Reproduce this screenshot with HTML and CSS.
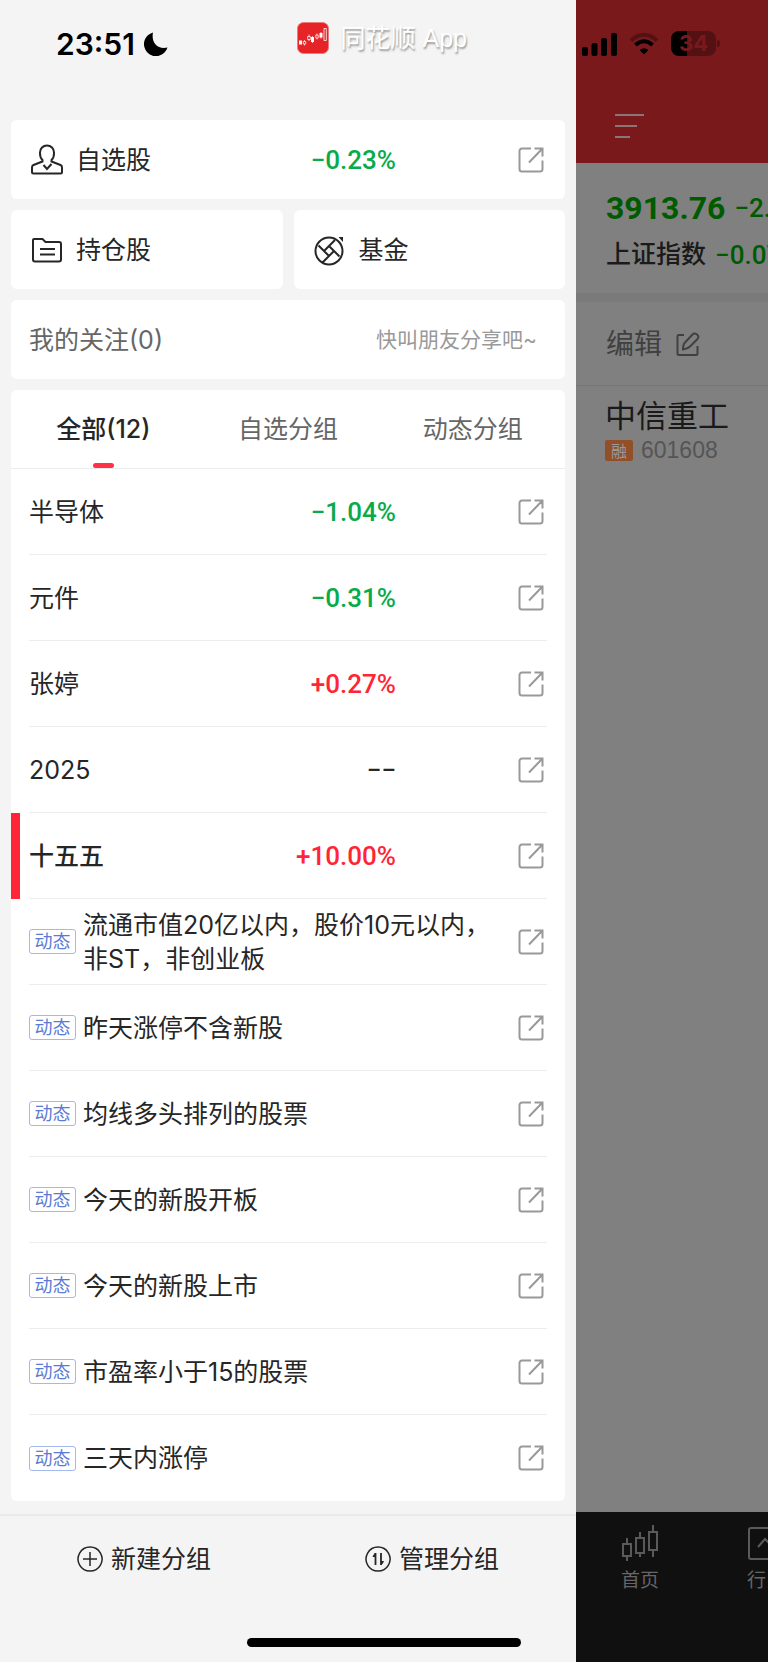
FILE: index.html
```
<!DOCTYPE html>
<html lang="zh-CN">
<head>
  <meta charset="UTF-8" />
  <meta name="viewport" content="width=device-width, initial-scale=1" />
  <title>自选分组</title>
  <link rel="stylesheet" href="styles.css">
</head>
<body>

  <svg class="sprite" aria-hidden="true">
    <symbol id="icon-open" viewBox="0 0 26 26">
      <path d="M13 1.500H4A2.500 2.500 0 0 0 1.500 4v18A2.500 2.500 0 0 0 4 24.500h18a2.500 2.500 0 0 0 2.500-2.500v-8.500M16.500 1.500h8v8M24 2L11 15.500" />
    </symbol>
  </svg>

  <div class="screen">
    <aside class="drawer">
      <header class="drawer-top">
        <div class="clock">
          <span>23:51</span>
          <svg width="24" height="24" viewBox="0 0 24 24"><path d="M9 0.500C7 9.500 13 18 23.500 15.500A12 12 0 1 1 9 0.500z" fill="#000" /></svg>
        </div>
        <div class="brand">
          <svg width="32" height="32" viewBox="0 0 32 32">
            <rect x="0.500" y="0.500" width="31" height="31" rx="6" fill="#e62326" stroke="#ee7c7c" />
            <path d="M2 18.500h3v4H2zM14 15h3v5h-3zM22.500 11h3v4.500h-3z" fill="#fff" />
            <path d="M7.500 19v3.500M7.500 18v5.500M12 12.500v6.500M15.500 14v7M20 11.500v6M24 10v6.500" stroke="#fff" stroke-width="0.700" />
            <path d="M6.300 19.500h2.400v2.500H6.300zM10.700 14.500h2.600v3h-2.600zM18.800 13h2.400v3h-2.400zM27 6.500h2.300v12H27z" fill="#e62326" stroke="#fff" stroke-width="0.800" />
          </svg>
          <span>同花顺 App</span>
        </div>
      </header>

      <main class="cards">
        <section class="card card-row">
          <svg class="card-icon" viewBox="0 0 32 32">
            <path d="M11.500 16C8.500 13.500 9 9.500 9 8.500C9 4.500 12 1.500 16 1.500s7 3 7 7c0 1 .5 5-2.500 7.500v1.500l9 3.500q1.500.7 1.500 2.500v4.500q0 1.500-1.500 1.500h-27Q1 29.500 1 28v-4.500Q1 21.700 2.500 21l9-3.500z" />
            <path d="M12.500 21l3.500 4 4.500-5" />
          </svg>
          <h2 class="card-title">自选股</h2>
          <span class="change down">−0.23%</span>
          <button class="open-btn" type="button" aria-label="打开"><svg><use href="#icon-open" /></svg></button>
        </section>

        <div class="card-pair">
          <section class="card card-row">
            <svg class="card-icon" viewBox="0 0 32 32">
              <path d="M3 5h8.500l3 3H28q2 0 2 2v15.500q0 2-2 2H4q-2 0-2-2V6q0-1 1-1zM9 15h15M9 20.500h15" />
            </svg>
            <h2 class="card-title">持仓股</h2>
          </section>
          <section class="card card-row">
            <svg class="card-icon" viewBox="0 0 32 32">
              <circle cx="15" cy="17" r="13.500" />
              <path d="M4.500 11.500L15 22M10 17L21 6M15 12l10.500 10.500M20 17L8.500 28.500" />
              <path d="M24.500 3h4.500v5z" fill="#262626" stroke="none" />
            </svg>
            <h2 class="card-title">基金</h2>
          </section>
        </div>

        <section class="card card-row follow">
          <h2>我的关注(0)</h2>
          <p>快叫朋友分享吧~</p>
        </section>

        <section class="card groups">
          <nav class="tabs">
            <button class="tab active" type="button">全部(12)</button>
            <button class="tab" type="button">自选分组</button>
            <button class="tab" type="button">动态分组</button>
          </nav>

          <ul class="group-list">
            <li>
              <span class="name">半导体</span>
              <span class="change down">−1.04%</span>
              <button class="open-btn" type="button" aria-label="打开"><svg><use href="#icon-open" /></svg></button>
            </li>
            <li>
              <span class="name">元件</span>
              <span class="change down">−0.31%</span>
              <button class="open-btn" type="button" aria-label="打开"><svg><use href="#icon-open" /></svg></button>
            </li>
            <li>
              <span class="name">张婷</span>
              <span class="change up">+0.27%</span>
              <button class="open-btn" type="button" aria-label="打开"><svg><use href="#icon-open" /></svg></button>
            </li>
            <li>
              <span class="name">2025</span>
              <span class="change">−−</span>
              <button class="open-btn" type="button" aria-label="打开"><svg><use href="#icon-open" /></svg></button>
            </li>
            <li class="current">
              <span class="name">十五五</span>
              <span class="change up">+10.00%</span>
              <button class="open-btn" type="button" aria-label="打开"><svg><use href="#icon-open" /></svg></button>
            </li>
            <li>
              <span class="tag">动态</span>
              <span class="name">流通市值20亿以内，股价10元以内，非ST，非创业板</span>
              <button class="open-btn" type="button" aria-label="打开"><svg><use href="#icon-open" /></svg></button>
            </li>
            <li>
              <span class="tag">动态</span>
              <span class="name">昨天涨停不含新股</span>
              <button class="open-btn" type="button" aria-label="打开"><svg><use href="#icon-open" /></svg></button>
            </li>
            <li>
              <span class="tag">动态</span>
              <span class="name">均线多头排列的股票</span>
              <button class="open-btn" type="button" aria-label="打开"><svg><use href="#icon-open" /></svg></button>
            </li>
            <li>
              <span class="tag">动态</span>
              <span class="name">今天的新股开板</span>
              <button class="open-btn" type="button" aria-label="打开"><svg><use href="#icon-open" /></svg></button>
            </li>
            <li>
              <span class="tag">动态</span>
              <span class="name">今天的新股上市</span>
              <button class="open-btn" type="button" aria-label="打开"><svg><use href="#icon-open" /></svg></button>
            </li>
            <li>
              <span class="tag">动态</span>
              <span class="name">市盈率小于15的股票</span>
              <button class="open-btn" type="button" aria-label="打开"><svg><use href="#icon-open" /></svg></button>
            </li>
            <li>
              <span class="tag">动态</span>
              <span class="name">三天内涨停</span>
              <button class="open-btn" type="button" aria-label="打开"><svg><use href="#icon-open" /></svg></button>
            </li>
          </ul>
        </section>
      </main>

      <footer class="drawer-actions">
        <button type="button">
          <svg viewBox="0 0 26 26"><path d="M13 1a12 12 0 1 0 .1 0zM13 6v14M6 13h14" /></svg>
          新建分组
        </button>
        <button type="button">
          <svg viewBox="0 0 26 26">
            <path d="M13 1a12 12 0 1 0 .1 0z" />
            <path d="M10.500 7v12M16 7v12" stroke-width="1.800" />
            <path d="M10 7.500L8 10.500h2zM16.500 18.500v-3h2z" fill="#262626" stroke-width="1" />
          </svg>
          管理分组
        </button>
      </footer>
    </aside>

    <div class="page">
      <header class="page-top">
        <div class="status">
          <svg width="35" height="24" viewBox="0 0 35 24">
            <rect x="0" y="15" width="6" height="9" rx="2" />
            <rect x="9.500" y="11" width="6" height="13" rx="2" />
            <rect x="19" y="6" width="6" height="18" rx="2" />
            <rect x="29" y="1" width="6" height="23" rx="2" />
          </svg>
          <svg width="30" height="24" viewBox="0 0 30 24">
            <path d="M2 8.500Q15-3 28 8.500" fill="none" stroke="#541114" stroke-width="4" />
            <path d="M6.500 13Q15 5.500 23.500 13" fill="none" stroke="#000" stroke-width="4" />
            <path d="M15 22.500L10.500 18Q15 14.500 19.500 18z" />
          </svg>
          <span class="battery">34</span>
        </div>
        <button class="menu-btn" type="button" aria-label="菜单">
          <svg width="30" height="24" viewBox="0 0 30 24"><path d="M0 1h29M0 12h22M0 23h15" stroke="#8b7577" stroke-width="2" /></svg>
        </button>
      </header>

      <section class="index">
        <div class="index-line"><strong>3913.76</strong><span>−2.</span></div>
        <div class="index-line"><h3>上证指数</h3><span>−0.07</span></div>
      </section>

      <button class="edit-btn" type="button">
        编辑
        <svg width="24" height="24" viewBox="0 0 24 24"><path d="M8 3H3q-1.500 0-1.500 1.500v17q0 1.500 1.500 1.500h17q1.500 0 1.500-1.500V14M7 17.500q0-5 2-7L16.500 2.500q2-2 4.500 0t.5 4.500L14 14.500q-2.500 2.500-7 3z" /></svg>
      </button>

      <section class="stock">
        <h3>中信重工</h3>
        <p><span class="margin-tag">融</span>601608</p>
      </section>

      <nav class="bottom-nav">
        <a href="#home">
          <svg width="38" height="36" viewBox="0 0 38 36"><path d="M6 13v6M6 31v5M2 19h8v12H2zM19 7v6M19 28v4M15 13h8v15h-8zM32 0v7M32 25v7M28 7h8v18h-8z" /></svg>
          首页
        </a>
        <a href="#market">
          <svg width="38" height="36" viewBox="0 0 38 36"><path d="M4 3h30q2 0 2 2v27q0 2-2 2H4q-2 0-2-2V5q0-2 2-2zM11 22l7-8 7 7 5-5" /></svg>
          行
        </a>
      </nav>
    </div>

    <div class="home-indicator"></div>
  </div>

</body>
</html>
```
FILE: styles.css
```
* {
  box-sizing: border-box;
}

body {
  margin: 0;
  font-family: Inter, "Noto Sans CJK SC", sans-serif;
  font-size: 25px;
  line-height: 34px;
  color: #262626;
  background: #f4f4f4;
}

h2, h3, p, ul {
  margin: 0;
  padding: 0;
  font-size: inherit;
  font-weight: 400;
}

button {
  padding: 0;
  border: none;
  background: none;
  font: inherit;
  color: inherit;
  cursor: pointer;
}

svg {
  display: block;
  flex: none;
}

.sprite {
  position: absolute;
  width: 0;
  height: 0;
}

.screen {
  position: relative;
  display: flex;
  min-height: 100vh;
}

/* drawer */
.drawer {
  width: 75%;
  display: flex;
  flex-direction: column;
  background: #f4f4f4;
}

.drawer-top {
  height: 120px;
  padding: 22px 109px 0 56px;
  display: flex;
  justify-content: space-between;
  align-items: flex-start;
}

.clock {
  display: flex;
  align-items: center;
  gap: 9px;
  padding-top: 5px;
  font-size: 30px;
  font-weight: 600;
  color: #000;
}

.brand {
  display: flex;
  align-items: center;
  gap: 12px;
  font-family: "Liberation Sans", "Noto Sans CJK SC", sans-serif;
  line-height: 32px;
  color: #fff;
  text-shadow: 1px 2px 2px #999;
}

.cards {
  flex: 1;
  display: flex;
  flex-direction: column;
  gap: 11px;
  padding: 0 11px 13px;
}

.card {
  background: #fff;
  border-radius: 6px;
}

.card-row {
  height: 79px;
  padding: 0 18px 0 20px;
  display: flex;
  align-items: center;
}

.card-pair {
  display: grid;
  grid-template-columns: 1fr 1fr;
  gap: 11px;
}

.card-icon {
  width: 32px;
  height: 32px;
  margin-right: 13px;
  fill: none;
  stroke: #262626;
  stroke-width: 2;
}

.card-title {
  flex: 1;
}

.follow {
  justify-content: space-between;
  padding: 0 28px 0 18px;
  color: #666;
}

.follow p {
  font-size: 21px;
  color: #999;
}

.tabs {
  display: grid;
  grid-template-columns: repeat(3, 1fr);
  height: 79px;
  border-bottom: 1px solid #ededed;
}

.tab {
  position: relative;
  color: #666;
}

.tab.active {
  font-weight: 500;
  color: #262626;
}

.tab.active::after {
  content: "";
  position: absolute;
  left: 50%;
  bottom: 0;
  width: 21px;
  height: 5px;
  margin-left: -10px;
  border-radius: 3px;
  background: #ff3347;
}

.group-list {
  list-style: none;
}

.group-list li {
  position: relative;
  display: flex;
  align-items: center;
  height: 86px;
  margin: 0 18px;
  border-bottom: 1px solid #ededed;
}

.group-list li:last-child {
  border-bottom: none;
}

.name {
  flex: 1;
}

.current .name {
  font-weight: 500;
}

/* red bar on the card edge */
.group-list .current::before {
  content: "";
  position: absolute;
  left: -18px;
  top: 0;
  width: 9px;
  height: 86px;
  background: #ff2436;
}

.tag {
  width: 47px;
  height: 25px;
  margin-right: 7px;
  border: 1px solid #a3b8ee;
  border-radius: 3px;
  font-size: 18px;
  line-height: 23px;
  text-align: center;
  color: #5b7bd5;
}

.change {
  margin-right: 112px;
  font-family: Roboto, sans-serif;
  font-size: 26px;
  font-weight: 500;
}

.up {
  color: #ff2436;
}

.down {
  color: #07ab4b;
}

.open-btn {
  margin: 0 3px 0 10px;
}

.open-btn svg {
  width: 26px;
  height: 26px;
  fill: none;
  stroke: #999;
  stroke-width: 2;
}

.drawer-actions {
  display: grid;
  grid-template-columns: 1fr 1fr;
  padding-bottom: 60px;
  border-top: 2px solid #eaeaea;
}

.drawer-actions button {
  display: flex;
  justify-content: center;
  align-items: center;
  gap: 8px;
  height: 86px;
}

.drawer-actions svg {
  width: 26px;
  height: 26px;
  fill: none;
  stroke: #262626;
  stroke-width: 1.5;
}

/* dimmed page behind the drawer */
.page {
  width: 25%;
  display: flex;
  flex-direction: column;
  overflow: hidden;
  white-space: nowrap;
  color: #1a1a1a;
  background: #808080;
}

.page-top {
  height: 163px;
  padding: 31px 0 0 6px;
  background: #7a191b;
}

.status {
  display: flex;
  align-items: center;
  gap: 12px;
}

.battery {
  position: relative;
  width: 45px;
  height: 25px;
  border-radius: 8px;
  background: linear-gradient(to right, #000 16px, #541114 16px);
  font-size: 22px;
  font-weight: 700;
  line-height: 25px;
  text-align: center;
  color: #7a191b;
}

.battery::after {
  content: "";
  position: absolute;
  right: -4px;
  top: 9px;
  width: 3px;
  height: 7px;
  border-radius: 0 3px 3px 0;
  background: #541114;
}

.menu-btn {
  display: block;
  margin: 58px 0 0 33px;
}

.index {
  padding: 21px 0 15px 30px;
  border-bottom: 9px solid #7a7a7a;
}

.index-line {
  display: flex;
  align-items: center;
  gap: 9px;
  height: 47px;
  font-family: Roboto, "Noto Sans CJK SC", sans-serif;
}

.index-line strong {
  font-size: 32px;
  font-weight: 700;
  color: #005a00;
}

.index-line span {
  font-size: 26px;
  font-weight: 500;
  color: #005a00;
}

.index-line h3 {
  font-weight: 500;
}

.edit-btn {
  display: flex;
  align-items: center;
  gap: 14px;
  height: 84px;
  padding-left: 30px;
  border-bottom: 1px solid #777;
  font-size: 28px;
  color: #404040;
}

.edit-btn svg {
  fill: none;
  stroke: #404040;
  stroke-width: 2;
}

.stock {
  flex: 1;
  padding: 13px 0 0 29px;
}

.stock h3 {
  font-size: 31px;
}

.stock p {
  display: flex;
  align-items: center;
  gap: 8px;
  font-family: "Liberation Sans", sans-serif;
  font-size: 23px;
  color: #555;
}

.margin-tag {
  width: 28px;
  border-radius: 2px;
  background: #915027;
  font-family: "Noto Sans CJK SC", sans-serif;
  font-size: 16px;
  line-height: 21px;
  text-align: center;
  color: #999;
}

.bottom-nav {
  display: flex;
  gap: 88px;
  height: 150px;
  padding: 13px 0 0 45px;
  background: #101010;
}

.bottom-nav a {
  font-size: 19px;
  text-decoration: none;
  color: #666;
}

.bottom-nav svg {
  margin-bottom: 3px;
  fill: none;
  stroke: #5a5a5a;
  stroke-width: 2;
}

.home-indicator {
  position: absolute;
  left: 50%;
  bottom: 15px;
  width: 274px;
  height: 9px;
  margin-left: -137px;
  border-radius: 5px;
  background: #000;
}
```
